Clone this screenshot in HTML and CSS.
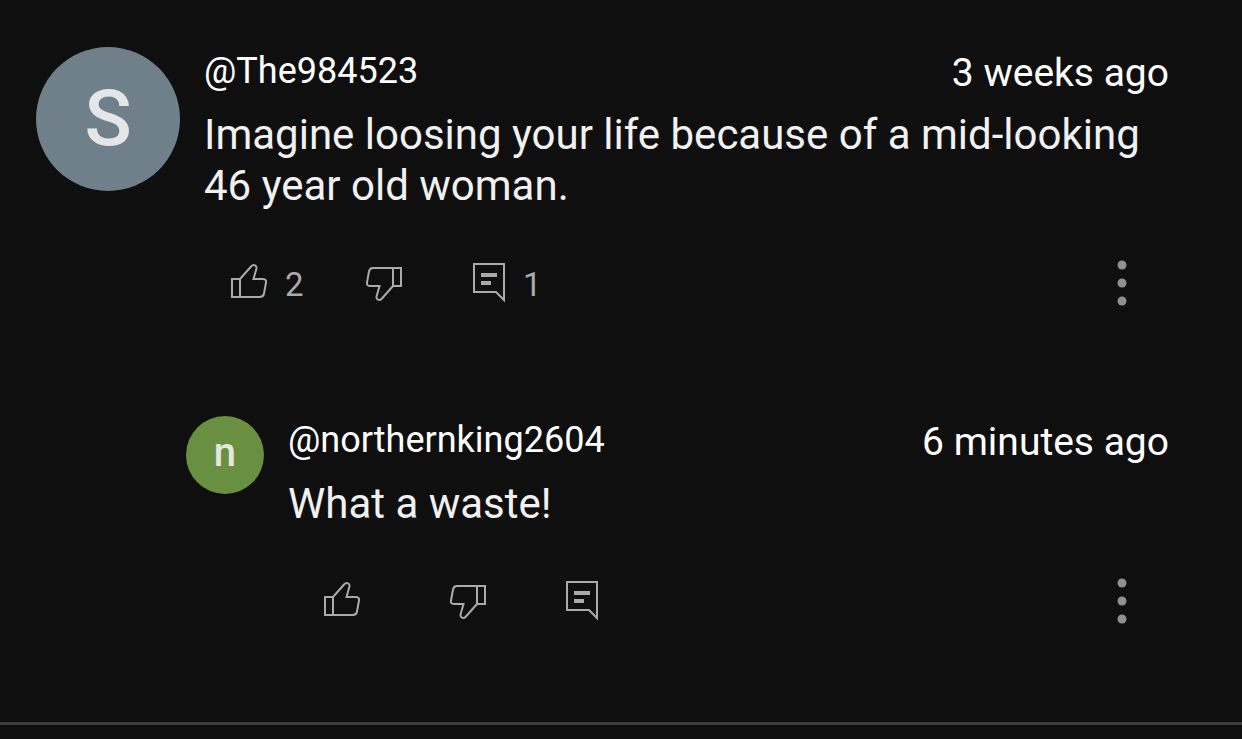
FILE: index.html
```
<!DOCTYPE html>
<html lang="en">
  <head>
    <meta charset="utf-8">
    <meta name="viewport" content="width=device-width, initial-scale=1">
    <title>Comments</title>
    <link rel="stylesheet" href="styles.css">
  </head>
  <body>
    <main class="thread">
      <article class="comment">
        <div class="avatar">S</div>
        <div class="content">
          <header class="header">
            <a class="author" href="#">@The984523</a>
            <time class="time">3 weeks ago</time>
          </header>
          <p class="text">Imagine loosing your life because of a mid-looking 46 year old woman.</p>
          <div class="actions">
            <button class="button like" type="button" aria-label="Like">
              <svg width="36" height="38" viewBox="0 0 36 38"><path d="M9 15H1V33H9ZM9 15L20.300 2.300C22.500 0 26.200 1.300 25.400 4.800L22.500 15H31.500Q35.600 15 35 18.500L33 29.500Q32.300 33 29 33H9"/></svg>
              <span class="count">2</span>
            </button>
            <button class="button dislike" type="button" aria-label="Dislike">
              <svg width="36" height="38" viewBox="0 0 36 38"><path transform="rotate(180 18 18.500)" d="M9 15H1V33H9ZM9 15L20.300 2.300C22.500 0 26.200 1.300 25.400 4.800L22.500 15H31.500Q35.600 15 35 18.500L33 29.500Q32.300 33 29 33H9"/></svg>
            </button>
            <button class="button replies" type="button" aria-label="Replies">
              <svg width="32" height="40" viewBox="0 0 32 40"><path d="M1 1H31V37L23 29H1Z"/><path class="solid" d="M8 10H24V14H8ZM8 18H18V22H8Z"/></svg>
              <span class="count">1</span>
            </button>
            <button class="button menu" type="button" aria-label="More">
              <svg width="10" height="46" viewBox="0 0 10 46"><g class="dots"><circle cx="5" cy="5" r="4.500"/><circle cx="5" cy="23" r="4.500"/><circle cx="5" cy="41" r="4.500"/></g></svg>
            </button>
          </div>
        </div>
      </article>

      <article class="comment reply">
        <div class="avatar">n</div>
        <div class="content">
          <header class="header">
            <a class="author" href="#">@northernking2604</a>
            <time class="time">6 minutes ago</time>
          </header>
          <p class="text">What a waste!</p>
          <div class="actions">
            <button class="button like" type="button" aria-label="Like">
              <svg width="36" height="38" viewBox="0 0 36 38"><path d="M9 15H1V33H9ZM9 15L20.300 2.300C22.500 0 26.200 1.300 25.400 4.800L22.500 15H31.500Q35.600 15 35 18.500L33 29.500Q32.300 33 29 33H9"/></svg>
            </button>
            <button class="button dislike" type="button" aria-label="Dislike">
              <svg width="36" height="38" viewBox="0 0 36 38"><path transform="rotate(180 18 18.500)" d="M9 15H1V33H9ZM9 15L20.300 2.300C22.500 0 26.200 1.300 25.400 4.800L22.500 15H31.500Q35.600 15 35 18.500L33 29.500Q32.300 33 29 33H9"/></svg>
            </button>
            <button class="button replies" type="button" aria-label="Replies">
              <svg width="32" height="40" viewBox="0 0 32 40"><path d="M1 1H31V37L23 29H1Z"/><path class="solid" d="M8 10H24V14H8ZM8 18H18V22H8Z"/></svg>
            </button>
            <button class="button menu" type="button" aria-label="More">
              <svg width="10" height="46" viewBox="0 0 10 46"><g class="dots"><circle cx="5" cy="5" r="4.500"/><circle cx="5" cy="23" r="4.500"/><circle cx="5" cy="41" r="4.500"/></g></svg>
            </button>
          </div>
        </div>
      </article>
    </main>
  </body>
</html>
```
FILE: styles.css
```
body {
  margin: 0;
  background: #0f0f0f;
  color: #f1f1f1;
  font-family: Roboto, "Liberation Sans", sans-serif;
}

.thread {
  padding-bottom: 35px;
  border-bottom: 3px solid #3d3d3d;
}

.comment {
  display: flex;
  align-items: flex-start;
  gap: 24px;
  padding: 47px 73px 62px 36px;
}
.reply { padding-left: 186px; }

.avatar {
  flex: none;
  width: 144px;
  height: 144px;
  border-radius: 50%;
  background: #70808a;
  color: #e4e6e8;
  font-size: 78px;
  font-weight: 500;
  line-height: 144px;
  text-align: center;
}
.reply .avatar {
  width: 78px;
  height: 78px;
  background: #689040;
  color: #e4e6e0;
  font-size: 40px;
  line-height: 74px;
}

.content {
  flex: 1;
  min-width: 0;
}

.header {
  display: flex;
  justify-content: space-between;
  margin-bottom: 10px;
  color: #fff;
}
.author {
  color: inherit;
  text-decoration: none;
  font-size: 36px;
  line-height: 48px;
}
.time {
  font-size: 39px;
  line-height: 52px;
}

.text {
  margin: 0 0 48px;
  font-size: 42px;
  line-height: 51px;
}

.actions {
  display: grid;
  grid-template-columns: 135px 107px 1fr auto;
  height: 48px;
  padding: 0 42px 0 27px;
}
.reply .actions {
  grid-template-columns: 126px 116px 1fr auto;
  padding-left: 36px;
}

.button {
  display: flex;
  align-items: center;
  gap: 18px;
  padding: 0;
  border: 0;
  background: none;
  color: #aaa;
  font-family: inherit;
  cursor: pointer;
}
.button svg {
  flex: none;
  fill: none;
  stroke: currentColor;
  stroke-width: 2;
}
.button .solid,
.button .dots {
  fill: currentColor;
  stroke: none;
}
.menu { color: #909090; }

.count {
  margin-top: 4px;
  font-size: 33px;
  line-height: 40px;
}
```
